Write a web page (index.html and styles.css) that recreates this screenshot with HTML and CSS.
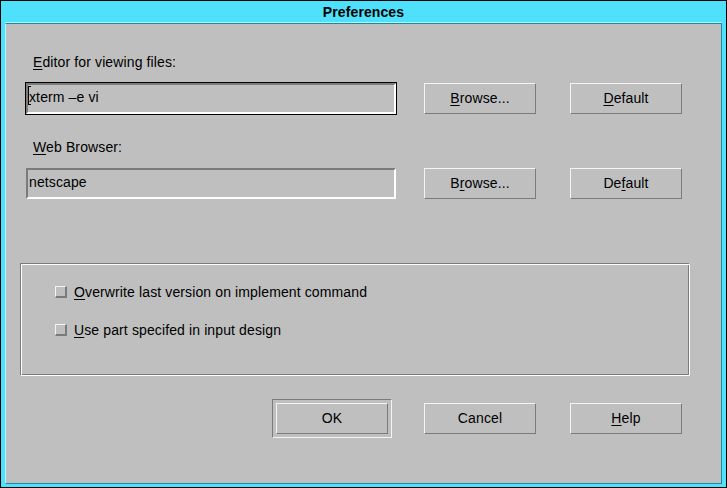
FILE: index.html
```html
<!DOCTYPE html>
<html>
<head>
<meta charset="utf-8">
<title>Preferences</title>
<link rel="stylesheet" href="styles.css">
</head>
<body>
<div class="frame">
  <div class="titlebar"><span class="title">Preferences</span></div>
  <div class="panel">
    <div class="block">
      <div class="label"><u>E</u>ditor for viewing files:</div>
      <div class="row">
        <div class="focus-ring focused">
          <div class="field"><span class="caret"></span>xterm –e vi</div>
        </div>
        <div class="btn browse"><u>B</u>rowse...</div>
        <div class="btn default"><u>D</u>efault</div>
      </div>
    </div>
    <div class="block second">
      <div class="label"><u>W</u>eb Browser:</div>
      <div class="row">
        <div class="focus-ring">
          <div class="field">netscape</div>
        </div>
        <div class="btn browse">B<u>r</u>owse...</div>
        <div class="btn default">De<u>f</u>ault</div>
      </div>
    </div>
    <div class="group">
      <div class="check"><span class="box"></span><span><u>O</u>verwrite last version on implement command</span></div>
      <div class="check"><span class="box"></span><span><u>U</u>se part specifed in input design</span></div>
    </div>
    <div class="actions">
      <div class="default-ring"><div class="btn">OK</div></div>
      <div class="btn cancel">Cancel</div>
      <div class="btn help"><u>H</u>elp</div>
    </div>
  </div>
</div>
</body>
</html>
```
FILE: styles.css
```css
html, body {
  margin: 0;
  padding: 0;
  background: #000;
}

.frame {
  width: 727px;
  height: 488px;
  box-sizing: border-box;
  border: 1px solid #000;
  background: #4fe1fc;
  padding: 0 4px 3px 4px;
  display: flex;
  flex-direction: column;
  font-family: "Liberation Sans", Arial, sans-serif;
  font-size: 14px;
  letter-spacing: 0.12px;
  color: #000;
}

.titlebar {
  height: 21px;
  flex: none;
  border-bottom: 1px solid #b4f4ff;
  display: flex;
  align-items: center;
  justify-content: center;
}

.title {
  font-weight: bold;
  font-size: 14px;
  line-height: 16px;
  letter-spacing: 0.1px;
}

.panel {
  flex: 1;
  background: #bfbfbf;
  border-top: 1px solid #1a8aa2;
  border-left: 1px solid #b4f4ff;
  border-right: 1px solid #1a8aa2;
  border-bottom: 1px solid #1a8aa2;
  padding: 30px 0 0 14px;
}

u {
  text-decoration: underline;
  text-decoration-thickness: 1px;
  text-underline-offset: 2px;
}

.block {
  margin-left: 5px;
}

.block.second {
  margin-top: 24px;
}

.label {
  line-height: 16px;
  height: 16px;
  margin-left: 8px;
}

.row {
  display: flex;
  align-items: center;
  margin-top: 12px;
}

.focus-ring {
  border: 1px solid transparent;
}

.focus-ring.focused {
  border-color: #000;
}

.field {
  position: relative;
  width: 370px;
  height: 31px;
  box-sizing: border-box;
  border: 2px solid;
  border-color: #7b7b7b #fff #fff #7b7b7b;
  padding: 0 0 3px 1px;
  display: flex;
  align-items: center;
  line-height: 16px;
}

.caret {
  position: absolute;
  left: 0;
  top: 1px;
  width: 2px;
  height: 17px;
  border-left: 1px solid #000;
  border-top: 1px solid #000;
  border-bottom: 1px solid #000;
}

.btn {
  width: 112px;
  height: 31px;
  box-sizing: border-box;
  border: 1px solid;
  border-color: #f4f4f4 #7b7b7b #7b7b7b #f4f4f4;
  padding-bottom: 2px;
  display: flex;
  align-items: center;
  justify-content: center;
  line-height: 16px;
  flex: none;
}

.btn.browse {
  margin-left: 27px;
}

.btn.default {
  margin-left: 34px;
}

.group {
  margin-top: 63px;
  width: 670px;
  height: 113px;
  box-sizing: border-box;
  border: 1px solid;
  border-color: #7b7b7b #fff #fff #7b7b7b;
  box-shadow: inset 1px 1px 0 #fff, inset -1px -1px 0 #7b7b7b;
  padding: 20px 0 0 34px;
  display: flex;
  flex-direction: column;
  gap: 22px;
}

.check {
  display: flex;
  align-items: center;
  height: 16px;
  line-height: 16px;
}

.box {
  width: 12px;
  height: 12px;
  box-sizing: border-box;
  border-style: solid;
  border-width: 1px 2px 2px 1px;
  border-color: #f4f4f4 #7b7b7b #7b7b7b #f4f4f4;
  margin-right: 7px;
  flex: none;
}

.actions {
  display: flex;
  align-items: center;
  margin-top: 23px;
}

.default-ring {
  margin-left: 252px;
  border: 1px solid;
  border-color: #7b7b7b #f4f4f4 #f4f4f4 #7b7b7b;
  padding: 3px;
}

.btn.cancel {
  margin-left: 32px;
}

.btn.help {
  margin-left: 34px;
}
```
